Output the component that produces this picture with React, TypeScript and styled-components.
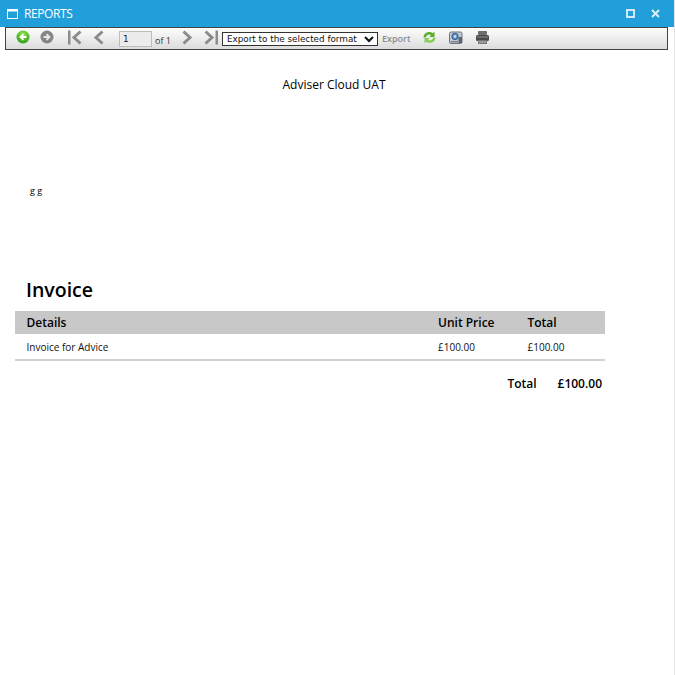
import styled, { createGlobalStyle } from "styled-components";

const GlobalStyle = createGlobalStyle`
    html, body {
        margin: 0;
        padding: 0;
        background: #fff;
    }
`;

const GreenBack = () => (
    <svg width="14" height="14" viewBox="0 0 14 14">
        <defs>
            <radialGradient id="gb" cx="0.5" cy="0.3" r="0.75">
                <stop offset="0" stopColor="#9be552" />
                <stop offset="1" stopColor="#1f9a12" />
            </radialGradient>
        </defs>
        <circle cx="7" cy="7" r="6.5" fill="url(#gb)" />
        <path d="M10.5 7H5M7.5 4.2L4.500 7l3 2.800" fill="none" stroke="#fff" strokeWidth="1.800" />
    </svg>
);

const GreyForward = () => (
    <svg width="14" height="14" viewBox="0 0 14 14">
        <circle cx="7" cy="7" r="6.5" fill="#858585" />
        <path d="M3.5 7H9M6.5 4.200l3 2.800-3 2.800" fill="none" stroke="#e8e8e8" strokeWidth="1.800" />
    </svg>
);

const Chevron = ({ flip, bar }: { flip?: boolean; bar?: boolean }) => (
    <svg width="14" height="15" viewBox="0 0 14 15" style={flip ? { transform: "scaleX(-1)" } : undefined}>
        {bar && <rect x="0" y="0.5" width="2.5" height="14" fill="#8c8c8c" />}
        <path d={bar ? "M12.5 1.5L6 7.5l6.500 6" : "M10.500 1.500L4 7.500l6.500 6"} fill="none" stroke="#8c8c8c" strokeWidth="3" />
    </svg>
);

const Refresh = () => (
    <svg width="15" height="15" viewBox="0 0 15 15">
        <path d="M1.500 7.500C1.500 3 7 .5 10.800 3.200L12.500 1.500V7H7.200L9 5.200C6.800 3.800 4.200 5 4 7.500Z" fill="#58ad2f" />
        <path d="M13.500 7.500C13.500 12 8 14.500 4.200 11.800L2.500 13.500V8H7.800L6 9.800C8.200 11.200 10.800 10 11 7.500Z" fill="#86cf58" />
    </svg>
);

const Layout = () => (
    <svg width="14" height="15" viewBox="0 0 14 15">
        <rect x="0.500" y="2" width="12.500" height="11.500" rx="1.500" fill="#c3c8cf" stroke="#6a7280" />
        <circle cx="6" cy="6.500" r="3.200" fill="#5d8fc4" stroke="#3d5f8c" />
        <circle cx="6" cy="6.500" r="1.200" fill="#dbe8f5" />
        <rect x="9.500" y="7" width="3.500" height="6" fill="#5a6470" />
        <rect x="2" y="11" width="7" height="1.500" fill="#7d8692" />
    </svg>
);

const Printer = () => (
    <svg width="15" height="15" viewBox="0 0 15 15">
        <rect x="3" y="1" width="9" height="4" rx="1" fill="#6e6e6e" />
        <rect x="1" y="5" width="13" height="6" rx="1.500" fill="#4a4a4a" />
        <rect x="2" y="6.500" width="11" height="1" fill="#8f8f8f" />
        <rect x="3" y="10" width="9" height="4" fill="#777" />
        <rect x="4" y="11.500" width="7" height="1" fill="#c4c4c4" />
    </svg>
);

const Maximize = () => (
    <svg width="9" height="9" viewBox="0 0 9 9">
        <rect x="1" y="1" width="7" height="7" fill="none" stroke="#cfeafa" strokeWidth="2" />
    </svg>
);

const Close = () => (
    <svg width="9" height="9" viewBox="0 0 9 9">
        <path d="M1 1l7 7M8 1L1 8" stroke="#d8effb" strokeWidth="2" />
    </svg>
);

const WindowIcon = () => (
    <svg width="11" height="10" viewBox="0 0 11 10">
        <rect x="0.500" y="0.500" width="10" height="9" fill="none" stroke="#fff" />
        <rect x="0.500" y="0.500" width="10" height="2" fill="#fff" />
    </svg>
);

export default function App() {
    return (
        <Page>
            <GlobalStyle />
            <TitleBar>
                <WindowIcon />
                <Title>REPORTS</Title>
                <WindowButtons>
                    <Maximize />
                    <Close />
                </WindowButtons>
            </TitleBar>
            <Toolbar>
                <IconButton $width={24}><GreenBack /></IconButton>
                <IconButton $width={24}><GreyForward /></IconButton>
                <IconButton $width={24} $left={4}><Chevron bar /></IconButton>
                <IconButton $width={27}><Chevron /></IconButton>
                <PageInput value="1" readOnly />
                <OfLabel>of 1</OfLabel>
                <IconButton $width={24}><Chevron flip /></IconButton>
                <IconButton $width={18}><Chevron flip bar /></IconButton>
                <FormatSelect>
                    <option>Export to the selected format</option>
                </FormatSelect>
                <ExportLink>Export</ExportLink>
                <IconButton $width={27} $left={3}><Refresh /></IconButton>
                <IconButton $width={26}><Layout /></IconButton>
                <IconButton $width={27}><Printer /></IconButton>
            </Toolbar>
            <Report>
                <CompanyName>Adviser Cloud UAT</CompanyName>
                <Address>g g</Address>
                <Heading>Invoice</Heading>
                <InvoiceTable>
                    <HeaderRow>
                        <span>Details</span>
                        <span>Unit Price</span>
                        <span>Total</span>
                    </HeaderRow>
                    <ItemRow>
                        <span>Invoice for Advice</span>
                        <span>£100.00</span>
                        <span>£100.00</span>
                    </ItemRow>
                </InvoiceTable>
                <TotalRow>
                    <span>Total</span>
                    <span>£100.00</span>
                </TotalRow>
            </Report>
        </Page>
    );
}

const Page = styled.div`
    width: 674px;
    height: 675px;
    border-right: 1px solid #e4e4e4;
    background: #fff;
    font-family: "Open Sans", "Noto Sans", sans-serif;
    overflow: hidden;
`;

const TitleBar = styled.div`
    display: flex;
    align-items: center;
    height: 27px;
    padding: 0 14px 0 7px;
    background: #219fdb;
    color: #fff;
`;

const Title = styled.span`
    margin-left: 6px;
    font-size: 12px;
    letter-spacing: -0.4px;
`;

const WindowButtons = styled.div`
    display: flex;
    gap: 16px;
    margin-left: auto;
`;

const Toolbar = styled.div`
    display: flex;
    align-items: center;
    box-sizing: border-box;
    width: 663px;
    height: 23px;
    margin-left: 5px;
    padding: 0 0 3px 10px;
    border: 1px solid #444;
    background: linear-gradient(#fdfdfd, #dcdcdc);
`;

const IconButton = styled.div<{ $width: number; $left?: number }>`
    display: flex;
    align-items: center;
    width: ${p => p.$width}px;
    margin-left: ${p => p.$left ?? 0}px;
`;

const PageInput = styled.input`
    box-sizing: border-box;
    flex: none;
    width: 33px;
    height: 16px;
    margin: 4px 0 0 0;
    padding: 0 0 0 3px;
    border: 1px solid #bdbdbd;
    background: #ececec;
    font-family: "DejaVu Sans", sans-serif;
    font-size: 9px;
    color: #222;
`;

const OfLabel = styled.span`
    width: 25px;
    margin: 6px 0 0 3px;
    font-size: 9px;
    color: #333;
`;

const FormatSelect = styled.select`
    box-sizing: border-box;
    flex: none;
    width: 156px;
    height: 14px;
    margin: 4px 0 0 0;
    padding: 0;
    border: 1px solid #333;
    border-radius: 0;
    background: #fff;
    font-family: "DejaVu Sans", sans-serif;
    font-size: 8.800px;
    color: #111;
`;

const ExportLink = styled.span`
    width: 37px;
    margin: 2px 0 0 4px;
    font-size: 9px;
    font-weight: 600;
    color: #8c8c8c;
`;

const Report = styled.div`
    display: flex;
    flex-direction: column;
    width: 590px;
    margin-left: 15px;
`;

const CompanyName = styled.div`
    margin: 26px 0 0 0;
    padding-left: 8px;
    text-align: center;
    width: 622px;
    font-size: 12px;
    line-height: 17px;
    color: #000;
`;

const Address = styled.div`
    margin: 92px 0 0 15px;
    font-size: 9px;
    line-height: 12px;
    color: #000;
`;

const Heading = styled.h1`
    margin: 79px 0 0 11px;
    font-size: 19.500px;
    line-height: 28px;
    font-weight: 600;
    color: #000;
`;

const InvoiceTable = styled.div`
    margin-top: 7px;
    border-bottom: 2px solid #d0d0d0;
`;

const Row = styled.div`
    display: grid;
    grid-template-columns: 411.500px 89.500px 1fr;
    align-items: center;
    padding-left: 11.500px;
`;

const HeaderRow = styled(Row)`
    height: 23px;
    background: #c8c8c8;
    font-size: 12px;
    font-weight: 600;
    color: #000;
`;

const ItemRow = styled(Row)`
    height: 25px;
    font-size: 10px;
    color: #111;
`;

const TotalRow = styled.div`
    display: flex;
    justify-content: flex-end;
    gap: 21px;
    margin-top: 14px;
    padding-right: 3px;
    font-size: 12px;
    line-height: 17px;
    font-weight: 600;
    color: #000;
`;
